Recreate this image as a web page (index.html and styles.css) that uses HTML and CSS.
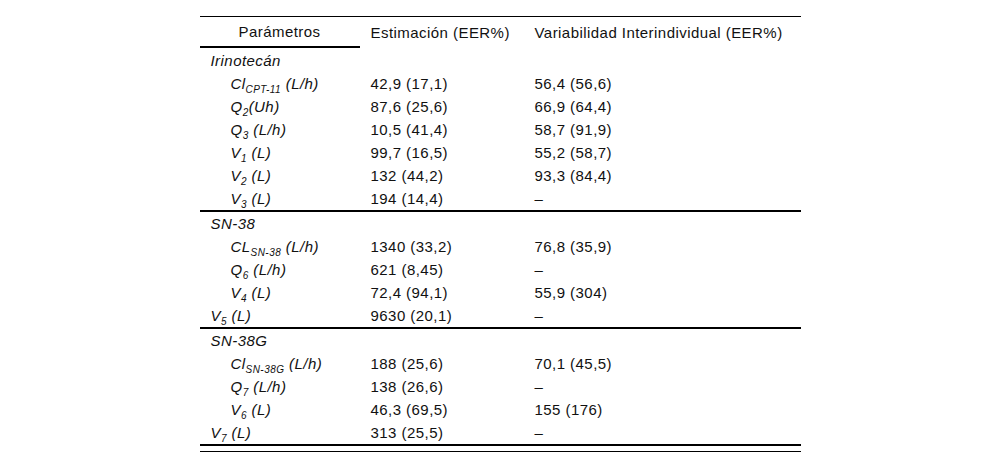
FILE: index.html
```html
<!DOCTYPE html>
<html lang="es">
<head>
<meta charset="utf-8">
<title>Parámetros farmacocinéticos</title>
<link rel="stylesheet" href="styles.css">
</head>
<body>
<div class="table-wrap">
  <table class="pk">
    <colgroup>
      <col class="c1">
      <col class="c2">
      <col class="c3">
    </colgroup>
    <thead>
      <tr>
        <th class="h1">Parámetros</th>
        <th class="h2">Estimación (EER%)</th>
        <th class="h3">Variabilidad Interindividual (EER%)</th>
      </tr>
    </thead>
    <tbody>
      <tr class="first"><td class="group">Irinotecán</td><td></td><td></td></tr>
      <tr><td class="param ind">Cl<sub>CPT-11</sub> (L/h)</td><td>42,9 (17,1)</td><td class="v3">56,4 (56,6)</td></tr>
      <tr><td class="param ind">Q<sub>2</sub>(Uh)</td><td>87,6 (25,6)</td><td class="v3">66,9 (64,4)</td></tr>
      <tr><td class="param ind">Q<sub>3</sub> (L/h)</td><td>10,5 (41,4)</td><td class="v3">58,7 (91,9)</td></tr>
      <tr><td class="param ind">V<sub>1</sub> (L)</td><td>99,7 (16,5)</td><td class="v3">55,2 (58,7)</td></tr>
      <tr><td class="param ind">V<sub>2</sub> (L)</td><td>132 (44,2)</td><td class="v3">93,3 (84,4)</td></tr>
      <tr class="last"><td class="param ind">V<sub>3</sub> (L)</td><td>194 (14,4)</td><td class="v3">–</td></tr>
    </tbody>
    <tbody>
      <tr><td class="group">SN-38</td><td></td><td></td></tr>
      <tr><td class="param ind">CL<sub>SN-38</sub> (L/h)</td><td>1340 (33,2)</td><td class="v3">76,8 (35,9)</td></tr>
      <tr><td class="param ind">Q<sub>6</sub> (L/h)</td><td>621 (8,45)</td><td class="v3">–</td></tr>
      <tr><td class="param ind">V<sub>4</sub> (L)</td><td>72,4 (94,1)</td><td class="v3">55,9 (304)</td></tr>
      <tr class="last"><td class="param">V<sub>5</sub> (L)</td><td>9630 (20,1)</td><td class="v3">–</td></tr>
    </tbody>
    <tbody>
      <tr><td class="group">SN-38G</td><td></td><td></td></tr>
      <tr><td class="param ind">Cl<sub>SN-38G</sub> (L/h)</td><td>188 (25,6)</td><td class="v3">70,1 (45,5)</td></tr>
      <tr><td class="param ind">Q<sub>7</sub> (L/h)</td><td>138 (26,6)</td><td class="v3">–</td></tr>
      <tr><td class="param ind">V<sub>6</sub> (L)</td><td>46,3 (69,5)</td><td class="v3">155 (176)</td></tr>
      <tr class="last"><td class="param">V<sub>7</sub> (L)</td><td>313 (25,5)</td><td class="v3">–</td></tr>
    </tbody>
  </table>
</div>
</body>
</html>
```

FILE: styles.css
```css
html, body {
  margin: 0;
  padding: 0;
  background: #ffffff;
}

body {
  font-family: "Liberation Sans", Arial, Helvetica, sans-serif;
  font-size: 15px;
  letter-spacing: 0.45px;
  color: #111111;
}

.table-wrap {
  width: 601px;
  margin: 16px auto 0;
  border-top: 1px solid #000;
  border-bottom: 1px solid #000;
  padding-bottom: 5px;
}

.pk {
  width: 100%;
  border-collapse: separate;
  border-spacing: 0;
  table-layout: fixed;
}

.c1 { width: 160px; }
.c2 { width: 165px; }
.c3 { width: auto; }

.pk th {
  font-weight: normal;
  height: 29px;
  padding: 0 0 0 11px;
  text-align: left;
  vertical-align: middle;
  white-space: nowrap;
}

.pk th.h1 {
  text-align: center;
  padding: 0;
  border-bottom: 2px solid #000;
}

.pk th.h3 {
  padding-left: 10px;
}

.pk td {
  height: 23px;
  line-height: 23px;
  padding: 0 0 0 11px;
  vertical-align: middle;
  white-space: nowrap;
}

.pk td.v3 {
  padding-left: 10px;
}

.pk tr.first td {
  height: 24px;
}

.pk tr.last td {
  border-bottom: 2px solid #000;
}

.group,
.param {
  font-style: italic;
}

.pk td.ind {
  padding-left: 31px;
}

sub {
  font-size: 10px;
  line-height: 0;
  vertical-align: -4px;
}
```
